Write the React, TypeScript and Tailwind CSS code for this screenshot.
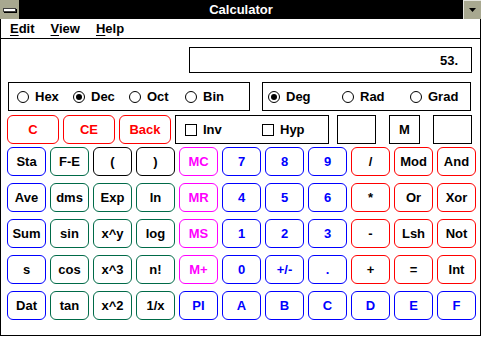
import React from "react";

type Btn = { t: string; b: string; c: string };

const BL = "border-[#0000ff]";
const GR = "border-[#006a48]";
const BK = "border-black";
const MG = "border-[#ff00ff]";
const RD = "border-[#ff0000]";
const tBK = "text-black";
const tBL = "text-[#0000ff]";
const tMG = "text-[#ff00ff]";

const rows: Btn[][] = [
  [
    { t: "Sta", b: BL, c: tBK },
    { t: "F-E", b: GR, c: tBK },
    { t: "(", b: BK, c: tBK },
    { t: ")", b: BK, c: tBK },
    { t: "MC", b: MG, c: tMG },
    { t: "7", b: BL, c: tBL },
    { t: "8", b: BL, c: tBL },
    { t: "9", b: BL, c: tBL },
    { t: "/", b: RD, c: tBK },
    { t: "Mod", b: RD, c: tBK },
    { t: "And", b: RD, c: tBK },
  ],
  [
    { t: "Ave", b: BL, c: tBK },
    { t: "dms", b: GR, c: tBK },
    { t: "Exp", b: GR, c: tBK },
    { t: "ln", b: GR, c: tBK },
    { t: "MR", b: MG, c: tMG },
    { t: "4", b: BL, c: tBL },
    { t: "5", b: BL, c: tBL },
    { t: "6", b: BL, c: tBL },
    { t: "*", b: RD, c: tBK },
    { t: "Or", b: RD, c: tBK },
    { t: "Xor", b: RD, c: tBK },
  ],
  [
    { t: "Sum", b: BL, c: tBK },
    { t: "sin", b: GR, c: tBK },
    { t: "x^y", b: GR, c: tBK },
    { t: "log", b: GR, c: tBK },
    { t: "MS", b: MG, c: tMG },
    { t: "1", b: BL, c: tBL },
    { t: "2", b: BL, c: tBL },
    { t: "3", b: BL, c: tBL },
    { t: "-", b: RD, c: tBK },
    { t: "Lsh", b: RD, c: tBK },
    { t: "Not", b: RD, c: tBK },
  ],
  [
    { t: "s", b: BL, c: tBK },
    { t: "cos", b: GR, c: tBK },
    { t: "x^3", b: GR, c: tBK },
    { t: "n!", b: GR, c: tBK },
    { t: "M+", b: MG, c: tMG },
    { t: "0", b: BL, c: tBL },
    { t: "+/-", b: BL, c: tBL },
    { t: ".", b: BL, c: tBL },
    { t: "+", b: RD, c: tBK },
    { t: "=", b: RD, c: tBK },
    { t: "Int", b: RD, c: tBK },
  ],
  [
    { t: "Dat", b: BL, c: tBK },
    { t: "tan", b: GR, c: tBK },
    { t: "x^2", b: GR, c: tBK },
    { t: "1/x", b: GR, c: tBK },
    { t: "PI", b: BL, c: tBL },
    { t: "A", b: BL, c: tBL },
    { t: "B", b: BL, c: tBL },
    { t: "C", b: BL, c: tBL },
    { t: "D", b: BL, c: tBL },
    { t: "E", b: BL, c: tBL },
    { t: "F", b: BL, c: tBL },
  ],
];

function Radio({ label, on, w }: { label: string; on?: boolean; w: string }) {
  return (
    <div className={`flex items-center ${w}`}>
      <div className="w-[12px] h-[12px] rounded-full border border-black flex items-center justify-center bg-white">
        {on && <div className="w-[6px] h-[6px] rounded-full bg-black" />}
      </div>
      <span className="ml-[6px]">{label}</span>
    </div>
  );
}

function Check({ label, w }: { label: string; w: string }) {
  return (
    <div className={`flex items-center ${w}`}>
      <div className="w-[12px] h-[12px] border border-black bg-white" />
      <span className="ml-[6px]">{label}</span>
    </div>
  );
}

export default function App() {
  return (
    <div
      className="w-[482px] h-[337px] bg-white text-black font-bold text-[13px] leading-none"
      style={{ fontFamily: '"Liberation Sans", Arial, sans-serif' }}
    >
      <div className="w-[481px] h-[336px] border-x border-b border-black flex flex-col">
        {/* title bar */}
        <div className="h-[19px] bg-black flex items-center mx-[-1px] relative">
          <div className="w-[19px] h-[19px] bg-[#a8a890] flex items-center justify-center">
            <div className="w-[13px] h-[4px] bg-white border border-[#404040] shadow-[1px_1px_0_#000]" />
          </div>
          <div className="flex-1 text-center text-white">Calculator</div>
          <div className="w-[18px] h-[19px] bg-[#a8a890] border-l border-t border-white/70 flex items-center justify-center">
            <svg width="7" height="4" viewBox="0 0 7 4">
              <polygon points="0,0 7,0 3.5,4" fill="#000" />
            </svg>
          </div>
        </div>
        {/* menu bar */}
        <div className="h-[20px] border-b border-black flex items-center pl-[9px] gap-[16px]">
          <span>
            <span className="underline underline-offset-2">E</span>dit
          </span>
          <span>
            <span className="underline underline-offset-2">V</span>iew
          </span>
          <span>
            <span className="underline underline-offset-2">H</span>elp
          </span>
        </div>
        {/* display */}
        <div className="mt-[8px] ml-[188px] w-[283px] h-[26px] border border-black flex items-center justify-end pr-[13px]">
          53.
        </div>
        {/* radio groups */}
        <div className="mt-[9px] ml-[7px] flex h-[29px]">
          <div className="w-[242px] h-full border border-black flex items-center pl-[8px]">
            <Radio label="Hex" w="w-[56px]" />
            <Radio label="Dec" on w="w-[56px]" />
            <Radio label="Oct" w="w-[56px]" />
            <Radio label="Bin" w="w-[56px]" />
          </div>
          <div className="ml-[12px] w-[209px] h-full border border-black flex items-center pl-[5px]">
            <Radio label="Deg" on w="w-[74px]" />
            <Radio label="Rad" w="w-[68px]" />
            <Radio label="Grad" w="w-[56px]" />
          </div>
        </div>
        {/* row 1 */}
        <div className="mt-[4px] ml-[6px] flex h-[29px]">
          {["C", "CE", "Back"].map((t, i) => (
            <div
              key={t}
              className={`w-[52px] h-full border border-[#ff0000] rounded-[6px] flex items-center justify-center text-[#ff0000] ${
                i > 0 ? "ml-[4px]" : ""
              }`}
            >
              {t}
            </div>
          ))}
          <div className="ml-[4px] w-[154px] h-full border border-black flex items-center pl-[9px]">
            <Check label="Inv" w="w-[77px]" />
            <Check label="Hyp" w="w-[60px]" />
          </div>
          <div className="ml-[8px] w-[39px] h-full border border-black" />
          <div className="ml-[13px] w-[31px] h-full border border-black flex items-center justify-center">
            M
          </div>
          <div className="ml-[13px] w-[39px] h-full border border-black" />
        </div>
        {/* grid */}
        <div className="mt-[3px] ml-[6px] grid grid-cols-[repeat(11,39px)] auto-rows-[29px] gap-x-[4px] gap-y-[7px]">
          {rows.flat().map((b, i) => (
            <div
              key={i}
              className={`border ${b.b} ${b.c} rounded-[6px] flex items-center justify-center`}
            >
              {b.t}
            </div>
          ))}
        </div>
      </div>
    </div>
  );
}
